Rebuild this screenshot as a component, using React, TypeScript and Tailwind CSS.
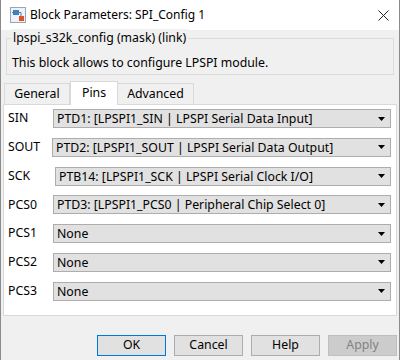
const ROWS = [
  { label: "SIN", value: "PTD1: [LPSPI1_SIN | LPSPI Serial Data Input]", ml: "ml-[45px]" },
  { label: "SOUT", value: "PTD2: [LPSPI1_SOUT | LPSPI Serial Data Output]", ml: "ml-[44px]" },
  { label: "SCK", value: "PTB14: [LPSPI1_SCK | LPSPI Serial Clock I/O]", ml: "ml-[47px]" },
  { label: "PCS0", value: "PTD3: [LPSPI1_PCS0 | Peripheral Chip Select 0]", ml: "ml-[45px]" },
  { label: "PCS1", value: "None", ml: "ml-[45px]" },
  { label: "PCS2", value: "None", ml: "ml-[45px]" },
  { label: "PCS3", value: "None", ml: "ml-[45px]" },
];

function BlockIcon() {
  return (
    <svg width="16" height="16" viewBox="0 0 16 16">
      <rect x="0.5" y="0.5" width="15" height="15" fill="#eef2f6" stroke="#9aa6b2" />
      <rect x="3" y="3" width="6" height="5" fill="#3d7fc1" />
      <path d="M2 5.5h1M9 5.5h2v5" stroke="#3d7fc1" fill="none" />
      <rect x="9" y="9" width="5" height="5" fill="#e0522c" />
    </svg>
  );
}

function Dropdown({ value }: { value: string }) {
  return (
    <div className="flex h-[19px] flex-1 items-center border border-[#adadad] bg-[#e1e1e1] pl-[3px] pr-[5px]">
      <span className="flex-1 whitespace-nowrap leading-[17px]">{value}</span>
      <svg width="7" height="4" viewBox="0 0 7 4">
        <path d="M0 0h7L3.5 4z" fill="#000" />
      </svg>
    </div>
  );
}

function Button({ children, primary, disabled }: { children: string; primary?: boolean; disabled?: boolean }) {
  return (
    <div
      className={
        "flex h-[21px] w-[69px] items-center justify-center border " +
        (primary
          ? "border-[#0078d7] bg-[#e1e1e1] text-black"
          : disabled
          ? "border-[#bfbfbf] bg-[#cccccc] text-[#838383]"
          : "border-[#adadad] bg-[#e1e1e1] text-black")
      }
    >
      {children}
    </div>
  );
}

export default function App() {
  return (
    <div
      className="h-[360px] w-[400px] overflow-hidden border-x border-[#8a8a8a] bg-[#f0f0f0] text-[12.3px] text-black"
      style={{ fontFamily: '"Segoe UI", "Noto Sans", sans-serif' }}
    >
      {/* Title bar */}
      <div className="flex h-[30px] items-center bg-white pl-[9px] pr-[10px] text-[12px]">
        <BlockIcon />
        <span className="ml-[4px] flex-1">Block Parameters: SPI_Config 1</span>
        <svg width="11" height="11" viewBox="0 0 11 11">
          <path d="M0.5 0.5l10 10M10.5 0.5l-10 10" stroke="#222" strokeWidth="1" />
        </svg>
      </div>

      {/* Mask description group */}
      <div className="relative mx-[5px] mt-[8px] h-[37px] border border-[#dcdcdc]">
        <span className="absolute -top-[10px] left-[4px] bg-[#f0f0f0] px-[2px]">lpspi_s32k_config (mask) (link)</span>
        <div className="pl-[5px] pt-[15px] leading-[17px]">This block allows to configure LPSPI module.</div>
      </div>

      {/* Tabs */}
      <div className="mt-[6px] flex h-[23px] items-end pl-[3px]">
        <div className="flex h-[21px] w-[66px] items-center justify-center border border-b-0 border-[#d9d9d9] bg-[#f0f0f0]">General</div>
        <div className="relative z-10 -mb-px flex h-[24px] w-[48px] items-center justify-center border border-b-0 border-[#d9d9d9] bg-white">Pins</div>
        <div className="flex h-[21px] w-[76px] items-center justify-center border border-b-0 border-l-0 border-[#d9d9d9] bg-[#f0f0f0]">Advanced</div>
      </div>

      {/* Tab panel */}
      <div className="mx-[2px] flex h-[212px] flex-col gap-[9.8px] border border-[#d9d9d9] bg-white pl-[4px] pr-[5px] pt-[4px]">
        {ROWS.map((r) => (
          <div key={r.label} className="flex h-[19px] items-center">
            <span className="absolute">{r.label}</span>
            <div className={"flex flex-1 " + r.ml}>
              <Dropdown value={r.value} />
            </div>
          </div>
        ))}
      </div>

      {/* Buttons */}
      <div className="mt-[19px] flex justify-end gap-[8px] pr-[2px]">
        <Button primary>OK</Button>
        <Button>Cancel</Button>
        <Button>Help</Button>
        <Button disabled>Apply</Button>
      </div>
    </div>
  );
}
